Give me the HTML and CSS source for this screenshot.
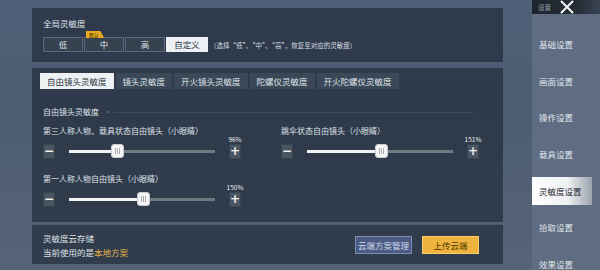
FILE: index.html
```html
<!DOCTYPE html>
<html lang="zh">
<head>
<meta charset="utf-8">
<link rel="stylesheet" href="styles.css">
</head>
<body>
<div class="screen">
  <main class="main">
    <section class="panel global">
      <div class="title">全局灵敏度</div>
      <div class="seg-row">
        <div class="seg">
          <div class="seg-btn">低</div>
          <div class="seg-btn has-badge">中<span class="badge">默认</span></div>
          <div class="seg-btn">高</div>
          <div class="seg-btn active">自定义</div>
        </div>
        <div class="hint">（选择“低”、“中”、“高”，恢复至对应的灵敏度）</div>
      </div>
    </section>

    <section class="panel sens">
      <div class="tabs">
        <div class="tab active">自由镜头灵敏度</div>
        <div class="tab">镜头灵敏度</div>
        <div class="tab">开火镜头灵敏度</div>
        <div class="tab">陀螺仪灵敏度</div>
        <div class="tab">开火陀螺仪灵敏度</div>
      </div>
      <div class="section-title"><span>自由镜头灵敏度</span><i class="dot"></i><i class="rule"></i></div>
      <div class="grid">
        <div class="slider-block">
          <div class="label">第三人称人物、载具状态自由镜头（小眼睛）</div>
          <div class="ctrl">
            <div class="pm">−</div>
            <div class="track"><div class="fill" style="width:48px"></div><div class="thumb" style="left:48px"><i></i><i></i><i></i></div></div>
            <div class="plus-wrap"><span class="pct">96%</span><div class="pm">+</div></div>
          </div>
        </div>
        <div class="slider-block">
          <div class="label">跳伞状态自由镜头（小眼睛）</div>
          <div class="ctrl">
            <div class="pm">−</div>
            <div class="track"><div class="fill" style="width:74px"></div><div class="thumb" style="left:74px"><i></i><i></i><i></i></div></div>
            <div class="plus-wrap"><span class="pct">151%</span><div class="pm">+</div></div>
          </div>
        </div>
        <div class="slider-block">
          <div class="label">第一人称人物自由镜头（小眼睛）</div>
          <div class="ctrl">
            <div class="pm">−</div>
            <div class="track"><div class="fill" style="width:74px"></div><div class="thumb" style="left:74px"><i></i><i></i><i></i></div></div>
            <div class="plus-wrap"><span class="pct">150%</span><div class="pm">+</div></div>
          </div>
        </div>
      </div>
    </section>

    <section class="panel cloud">
      <div class="cloud-text">
        <div>灵敏度云存储</div>
        <div>当前使用的是<span class="local">本地方案</span></div>
      </div>
      <div class="cloud-btns">
        <div class="btn blue">云端方案管理</div>
        <div class="btn yellow">上传云端</div>
      </div>
    </section>
  </main>

  <aside class="side">
    <div class="side-head">
      <span class="side-title">设置</span>
      <svg class="close" width="14" height="14" viewBox="0 0 14 14"><path d="M1.5 1.5 L12.5 12.5 M12.5 1.5 L1.5 12.5" stroke="#f4f4f4" stroke-width="2" stroke-linecap="round"/></svg>
    </div>
    <nav class="menu">
      <div class="item">基础设置</div>
      <div class="item">画面设置</div>
      <div class="item">操作设置</div>
      <div class="item">载具设置</div>
      <div class="item active">灵敏度设置</div>
      <div class="item">拾取设置</div>
      <div class="item">效果设置</div>
    </nav>
  </aside>
</div>
</body>
</html>
```

FILE: styles.css
```css
* { box-sizing: border-box; }
html, body { margin: 0; padding: 0; }
body {
  width: 600px; height: 270px; overflow: hidden;
  font-family: "Noto Sans CJK SC", "Noto Sans", sans-serif;
  color: #dfe3e8;
  background: linear-gradient(180deg, #4f6078 0%, #4c5c72 40%, #566478 100%);
}
.screen { display: flex; width: 600px; height: 270px; }
.main {
  width: 532px; padding: 8px 29px 0 32px;
  display: flex; flex-direction: column;
}
.panel { background: rgba(34, 44, 58, 0.7); }
.global { height: 54px; padding: 9px 11px 0; }
.title { font-size: 8.5px; line-height: 12px; }
.seg-row { display: flex; align-items: center; margin-top: 8px; }
.seg { display: flex; gap: 1px; }
.seg-btn {
  position: relative; width: 40px; height: 15px;
  border: 1px solid #5d6a7a; background: #36424f;
  font-size: 8.5px; line-height: 13px; text-align: center; color: #dfe3e8;
}
.seg-btn.active { background: #eef1f4; color: #2a3440; border-color: #eef1f4; width: 42px; }
.badge {
  position: absolute; left: 1px; top: -7px; height: 7px; padding: 0 5px 0 3px;
  background: #e8a91e; color: #3a2a00; font-size: 5px; line-height: 7px;
  clip-path: polygon(0 0, 80% 0, 100% 100%, 0 100%);
}
.hint { font-size: 6.5px; margin-left: 2px; color: #d9dde2; }

.sens { margin-top: 6px; height: 154px; padding: 5px 8px 0; }
.tabs { display: flex; gap: 2px; }
.tab {
  height: 16px; padding: 0 7px; background: #3b4857;
  font-size: 8.5px; line-height: 16px; color: #dfe3e8;
}
.tab.active { background: #eef1f4; color: #2a3440; }
.section-title {
  display: flex; align-items: center; margin: 17px 0 0 3px;
  font-size: 8px; line-height: 12px;
}
.dot { width: 2px; height: 2px; background: #66727f; margin-left: 8px; border-radius: 50%; }
.rule { flex: 1; height: 1px; background: rgba(120, 132, 148, 0.25); margin: 0 22px 0 4px; }
.grid {
  display: grid; grid-template-columns: 198px 198px; column-gap: 40px;
  row-gap: 14px; margin: 7px 0 0 3px;
}
.label { font-size: 8px; line-height: 12px; white-space: nowrap; }
.ctrl { display: flex; align-items: center; margin-top: 7px; height: 15px; }
.pm {
  width: 12px; height: 15px; background: #4a5562; border: 1px solid #3a444f;
  color: #f2f2f2; font-size: 12px; line-height: 12px; text-align: center;
  font-family: "DejaVu Sans", sans-serif; font-weight: bold;
}
.track {
  position: relative; width: 146px; height: 3px; margin: 0 14px 0 14px;
  background: #6f7a80;
}
.fill { position: absolute; left: 0; top: 0; height: 3px; background: #f4f4f4; }
.thumb {
  position: absolute; top: -6px; width: 13px; height: 14px; margin-left: -6px;
  background: #f6f6f6; border: 1px solid #c9ccd0; border-radius: 3px;
  display: flex; justify-content: center; align-items: center; gap: 1px;
}
.thumb i { width: 1px; height: 6px; background: #a9adb2; }
.plus-wrap { position: relative; }
.pct {
  position: absolute; bottom: 16px; left: 50%; transform: translateX(-50%);
  font-size: 6.5px; line-height: 8px; white-space: nowrap; color: #eef0f2;
}

.cloud {
  margin-top: 2px; height: 40px; padding: 0 24px 0 11px;
  display: flex; align-items: center; justify-content: space-between;
  border-top: 1px solid rgba(110, 124, 142, 0.5);
}
.cloud-text { font-size: 8.5px; line-height: 14px; }
.local { color: #e5b24a; }
.cloud-btns { display: flex; gap: 10px; }
.btn { height: 18px; font-size: 8.5px; line-height: 16px; text-align: center; }
.btn.blue { width: 57px; background: #4b5b86; border: 1px solid #7a8bb4; color: #d4dbeb; }
.btn.yellow { width: 57px; background: #f0b43e; border: 1px solid #f6cc6c; color: #4a3300; }

.side {
  width: 68px; height: 270px; background: #5e6d82;
  display: flex; flex-direction: column;
}
.side-head {
  height: 21px; display: flex; align-items: center; padding-left: 6px; gap: 9px;
  background: linear-gradient(90deg, #1d242d 0%, #262e38 70%, #3a4555 100%);
}
.side-title { font-size: 6.5px; color: #9aa3ad; }
.menu { display: flex; flex-direction: column; gap: 8.7px; padding-top: 16px; }
.item {
  height: 28px; padding-left: 7px; font-size: 8.5px; line-height: 28px; color: #e2e6eb;
}
.item.active {
  margin-right: 8px; color: #1f2630;
  background: linear-gradient(90deg, #ffffff 0%, #eef0f2 60%, #9aa3ad 100%);
}
```
